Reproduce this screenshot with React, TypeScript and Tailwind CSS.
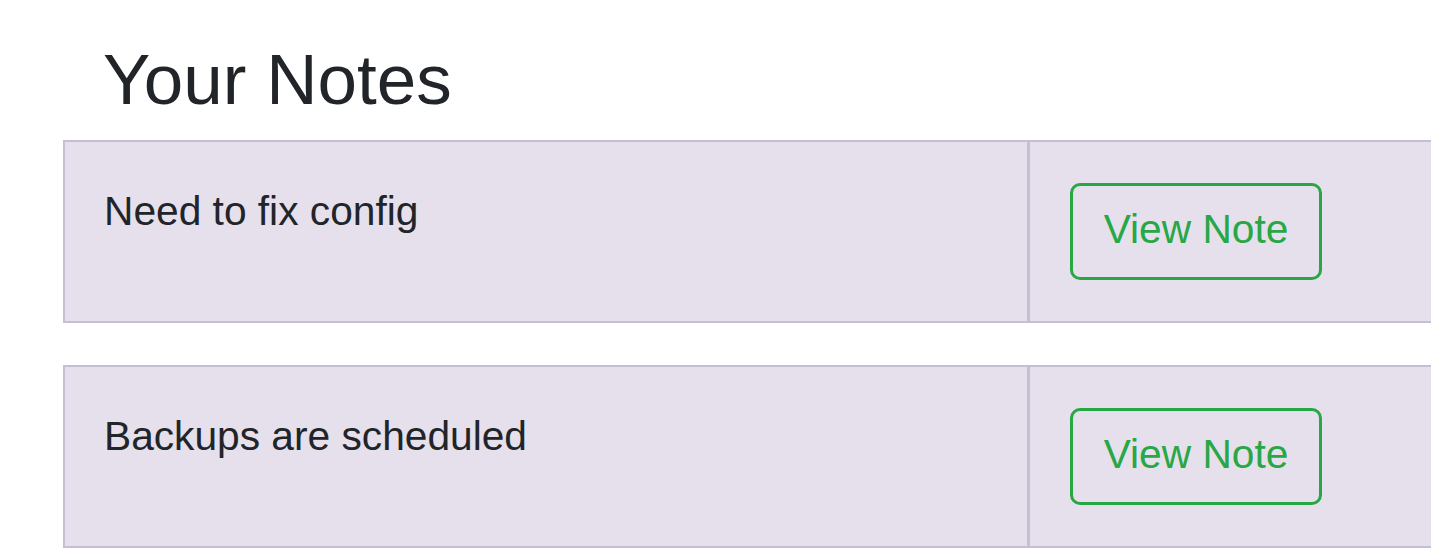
const notes = [
  { id: 1, text: "Need to fix config" },
  { id: 2, text: "Backups are scheduled" },
];

function NoteRow({ text }: { text: string }) {
  return (
    <div className="flex w-[1500px] h-[183px] bg-[#e5e0ec] border-2 border-[#c6bfd3]">
      <div className="w-[962px] shrink-0 pl-[39px] pt-[39px] text-[40.7px] leading-[60px] text-[#212529]">
        {text}
      </div>
      <div className="w-[3px] shrink-0 bg-[#c6bfd3]" />
      <div className="flex-1 pl-[40px] pt-[41px]">
        <button className="w-[252px] h-[97px] rounded-[10px] border-[3px] border-[#28a745] text-[#28a745] text-[40.7px] leading-[60px] flex items-center justify-center pb-[6px]">
          View Note
        </button>
      </div>
    </div>
  );
}

export default function App() {
  return (
    <div
      className="w-full h-[555px] overflow-hidden bg-white"
      style={{ fontFamily: '"Liberation Sans", Arial, sans-serif' }}
    >
      <h3 className="pl-[103px] pt-[38px] text-[71px] leading-[84px] font-normal text-[#212529]">
        Your Notes
      </h3>
      <div className="ml-[63px] mt-[18px] flex flex-col gap-[42px]">
        {notes.map((n) => (
          <NoteRow key={n.id} text={n.text} />
        ))}
      </div>
    </div>
  );
}
